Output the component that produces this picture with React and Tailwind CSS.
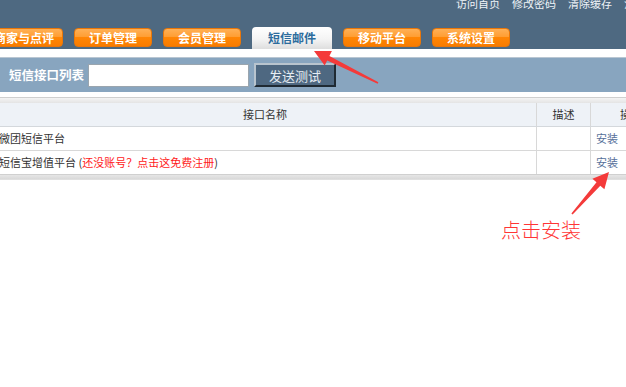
import React from "react";

const tabs = ["商家与点评", "订单管理", "会员管理", "短信邮件", "移动平台", "系统设置"];
const links = ["访问首页", "修改密码", "清除缓存", "注销"];

const Arrow = ({ points }) => <polygon points={points} fill="#f43a3a" />;

export default function App() {
  return (
    <div className="relative w-[626px] h-[387px] overflow-hidden bg-white font-['Noto_Sans_CJK_SC',sans-serif] text-[#333]">
      {/* top bar */}
      <div className="h-[49px] bg-[#4e6981] flex flex-col">
        <div className="h-[28px] flex justify-end gap-[12px] -mr-[20px] -mt-[4px] text-[11px] leading-[14px] text-[#eef3f7]">
          {links.map((l) => (
            <span key={l}>{l}</span>
          ))}
        </div>
        <div className="flex items-end gap-[11px] -ml-[15px] h-[21px] mt-[4px]">
          {tabs.map((t) =>
            t === "短信邮件" ? (
              <div
                key={t}
                className="w-[80px] h-[22px] rounded-t-[4px] bg-[linear-gradient(#ffffff,#f4f4f4_55%,#dedede)] flex items-center justify-center text-[12px] font-bold text-[#2c6c9d]"
              >
                {t}
              </div>
            ) : (
              <div
                key={t}
                className="w-[78px] h-[19px] mb-[2px] rounded-[4px] border border-[#e9770a] bg-[linear-gradient(#ffb055,#ff9c30_50%,#ff8605_50%,#f97c00)] flex items-center justify-center text-[12px] font-bold text-white"
              >
                {t}
              </div>
            )
          )}
        </div>
      </div>

      {/* white band */}
      <div className="h-[9px] bg-white border-b border-[#b9c6d2]" />

      {/* title bar */}
      <div className="h-[34px] bg-[#88a5bf] flex items-center pl-[9px]">
        <span className="text-[12.5px] font-bold text-white w-[79px]">短信接口列表</span>
        <input className="w-[161px] h-[23px] bg-white border border-[#9aa5ae] outline-none" />
        <button className="ml-[5px] w-[82px] h-[24px] bg-[#4e6881] border-2 border-t-[#b8c4ce] border-l-[#b8c4ce] border-r-[#1f2a33] border-b-[#1f2a33] text-[13px] text-[#e6edf3] leading-none">
          发送测试
        </button>
      </div>

      <div className="h-[5px] bg-white" />

      {/* table */}
      <div className="border-t border-[#cfcfcf] h-[6px] bg-[linear-gradient(#f4f4f4,#e4e4e4)]" />
      <div className="-ml-[6px] w-[711px] text-[11px]">
        <div className="flex h-[24px] bg-[#eef2f7] border-b border-[#d4d8dc] items-center text-[#333]">
          <div className="w-[543px] h-full flex items-center justify-center border-r border-[#d8d8d8]">接口名称</div>
          <div className="w-[54px] h-full flex items-center justify-center border-r border-[#d8d8d8]">描述</div>
          <div className="w-[80px] h-full flex items-center justify-center">操作</div>
        </div>
        <div className="flex h-[24px] border-b border-[#d8d8d8] items-center">
          <div className="w-[543px] h-full flex items-center pl-[5px] border-r border-[#d8d8d8]">微团短信平台</div>
          <div className="w-[54px] h-full border-r border-[#d8d8d8]" />
          <div className="w-[80px] h-full flex items-center pl-[5px] text-[#56709a]">安装</div>
        </div>
        <div className="flex h-[24px] border-b border-[#d0d0d0] items-center">
          <div className="w-[543px] h-full flex items-center pl-[5px] border-r border-[#d8d8d8]">
            短信宝增值平台 (<span className="text-[#ff1a1a]">还没账号？点击这免费注册</span>)
          </div>
          <div className="w-[54px] h-full border-r border-[#d8d8d8]" />
          <div className="w-[80px] h-full flex items-center pl-[5px] text-[#56709a]">安装</div>
        </div>
      </div>
      <div className="h-[5px] bg-[linear-gradient(#e6e6e6,#d9d9d9)] border-b border-[#e0e0e0]" />

      {/* annotations */}
      <svg className="absolute left-0 top-0 pointer-events-none" width="626" height="387">
        <Arrow points="378.4,82.3 329.4,56 331.9,51 314,51 324.7,65.4 327.2,60.4 377.6,83.7" />
        <Arrow points="572.6,214.5 600.3,185.7 604.4,189.3 609,172 592.4,178.7 596.5,182.3 571.4,213.5" />
      </svg>
      <div className="absolute left-[501px] top-[217px] text-[20px] font-light leading-[26px] text-[#ff3535]">
        点击安装
      </div>
    </div>
  );
}
